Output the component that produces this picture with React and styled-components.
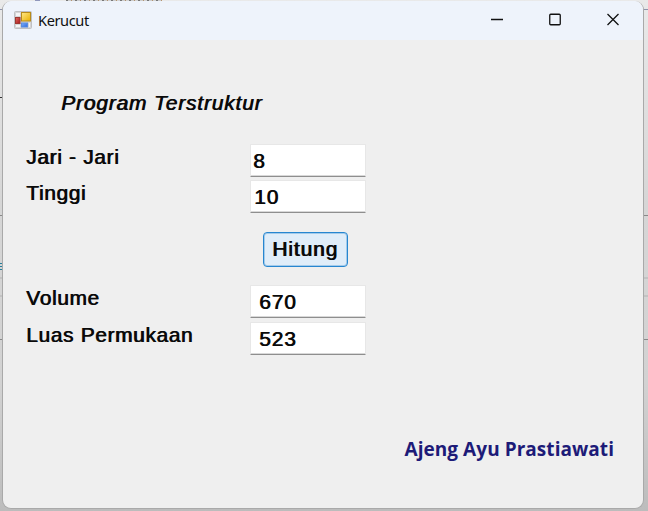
import React from "react";
import styled, { createGlobalStyle } from "styled-components";

const GlobalStyle = createGlobalStyle`
  * { box-sizing: border-box; }
  body { margin: 0; overflow: hidden; }
`;

const line = (color) => `linear-gradient(${color}, ${color})`;

const Desktop = styled.div`
  width: 648px;
  height: 511px;
  padding: 1px 4px 2px 2px;
  overflow: hidden;
  background-color: #d0d0d0;
  background-image:
    repeating-linear-gradient(90deg, #777 0 2px, #ccc 2px 5px, #b49370 5px 6px, #d4d4d4 6px 9px),
    ${line("#9097bb")},
    ${line("#27809c")}, ${line("#27809c")}, ${line("#27809c")},
    ${line("#333")},
    ${line("#8e93ab")},
    ${line("#898989")}, ${line("#898989")},
    ${line("#c3c3c3")}, ${line("#c3c3c3")},
    linear-gradient(#e9e9e9, #d6d6d6 40%, #d2d2d2 75%, #bcbcbc);
  background-repeat: no-repeat;
  background-size:
    96px 1px, 5px 1px,
    3px 1px, 3px 1px, 3px 1px, 3px 1px, 100% 1px,
    100% 1px, 100% 1px, 100% 2px, 100% 2px, 100% 100%;
  background-position:
    66px 0, 35px 0,
    0 263px, 0 266px, 0 269px, 0 97px, 0 9px,
    0 215px, 0 339px, 0 277px, 0 295px, 0 0;
`;

const Window = styled.main`
  display: flex;
  flex-direction: column;
  height: 508px;
  border: 1px solid #a9a9a9;
  border-top: 0;
  border-radius: 9px;
  overflow: hidden;
  background: #efefef;
`;

const TitleBar = styled.header`
  display: flex;
  align-items: center;
  height: 39px;
  flex: none;
  padding: 0 24px 2px 11px;
  background: #eef3fb;
`;

const Title = styled.h1`
  margin: 0 auto 0 6px;
  font: 400 14.6px/18px "Noto Sans", "Open Sans", sans-serif;
  letter-spacing: -0.4px;
  color: #111;
`;

const Controls = styled.div`
  display: flex;
  gap: 46px;
`;

const ControlButton = styled.button`
  display: flex;
  padding: 0;
  border: 0;
  background: none;
`;

const Form = styled.form`
  display: flex;
  flex-direction: column;
  padding: 49px 29px 0 23px;
  color: #0a0a0a;
  font: 400 20.8px/28px "Liberation Sans", Arial, sans-serif;
  letter-spacing: 0.7px;
  text-shadow: 0.8px 0 currentColor;
  -webkit-text-stroke: 0.1px currentColor;
`;

const Heading = styled.h2`
  margin: 0 0 27px 35px;
  font: italic 400 20.8px/28px "Liberation Sans", Arial, sans-serif;
  letter-spacing: 0.9px;
`;

const Field = styled.label`
  display: grid;
  grid-template-columns: 224px 116px;
  height: ${({ $height }) => $height}px;
`;

const Caption = styled.span`
  padding-top: 1px;
  line-height: 24px;
  white-space: nowrap;
`;

const NumberInput = styled.input`
  width: 116px;
  height: 33px;
  padding: 1px 0 0 ${({ $inset }) => $inset}px;
  border: 1px solid #e7e7e7;
  border-bottom-color: #8e8e8e;
  border-radius: 1px;
  outline: 0;
  background: #fff;
  box-shadow: inset 0 -1px #d8d8d8;
  color: inherit;
  font: inherit;
  letter-spacing: 0.9px;
  text-shadow: inherit;
  -webkit-text-stroke: inherit;
`;

const SubmitButton = styled.button`
  width: 85px;
  height: 35px;
  margin: 19px 0 18px 237px;
  padding: 0 1px 1px 0;
  border: 1px solid #2786d0;
  border-radius: 4px;
  background: #e0edf9;
  box-shadow: inset 0 0 0 1px #a3cbeb;
  color: inherit;
  font: inherit;
  letter-spacing: 0.95px;
  text-shadow: inherit;
  -webkit-text-stroke: inherit;
`;

const Author = styled.footer`
  margin-top: 81px;
  align-self: flex-end;
  color: #1d1b78;
  font: 700 19px/26px "Open Sans", "Noto Sans", sans-serif;
  letter-spacing: 0.05px;
  text-shadow: none;
  -webkit-text-stroke: 0;
`;

function FormIcon() {
  return (
    <svg width="18" height="18" viewBox="0 0 18 18">
      <defs>
        <linearGradient id="gold" x1="0" y1="0" x2="1" y2="1">
          <stop stopColor="#ffe88a" />
          <stop offset="1" stopColor="#e9b000" />
        </linearGradient>
        <linearGradient id="red" x1="0" y1="0" x2="1" y2="1">
          <stop stopColor="#e06b60" />
          <stop offset="1" stopColor="#a8141a" />
        </linearGradient>
        <linearGradient id="blue" x1="0" y1="0" x2="1" y2="1">
          <stop stopColor="#7eb0fa" />
          <stop offset="1" stopColor="#2f68dc" />
        </linearGradient>
      </defs>
      <rect x=".5" y=".5" width="17" height="17" rx="1" fill="#d5d5d7" stroke="#bfc0c3" />
      <path d="M2 2h4v3H2zM2 14h4v2H2zM15 12h1v4h-1z" fill="#f5f5f6" />
      <rect x="7.5" y="1.5" width="9" height="8.5" fill="url(#gold)" stroke="#b88b19" />
      <rect x="1.5" y="6.5" width="4.5" height="6" fill="url(#red)" stroke="#9d3832" />
      <rect x="7.5" y="12" width="6" height="4" fill="url(#blue)" stroke="#5a8de0" />
    </svg>
  );
}

const controls = [
  { name: "Minimize", shape: <path d="M0 6.5h12" /> },
  { name: "Maximize", shape: <rect x=".75" y="1.25" width="10.5" height="10.5" rx="1" /> },
  { name: "Close", shape: <path d="M.5 1l11 11M11.5 1l-11 11" /> },
];

const inputs = [
  { label: "Jari - Jari", value: "8", inset: 2, height: 36 },
  { label: "Tinggi", value: "10", inset: 3, height: 33 },
];

const results = [
  { label: "Volume", value: "670", inset: 8, height: 37 },
  { label: "Luas Permukaan", value: "523", inset: 8, height: 33 },
];

function FieldRow({ label, value, inset, height }) {
  return (
    <Field $height={height}>
      <Caption>{label}</Caption>
      <NumberInput $inset={inset} defaultValue={value} />
    </Field>
  );
}

export default function App() {
  return (
    <Desktop>
      <GlobalStyle />
      <Window>
        <TitleBar>
          <FormIcon />
          <Title>Kerucut</Title>
          <Controls>
            {controls.map(({ name, shape }) => (
              <ControlButton key={name} aria-label={name}>
                <svg width="12" height="13" viewBox="0 0 12 13" fill="none" stroke="#111" strokeWidth="1.3">
                  {shape}
                </svg>
              </ControlButton>
            ))}
          </Controls>
        </TitleBar>
        <Form onSubmit={(event) => event.preventDefault()}>
          <Heading>Program Terstruktur</Heading>
          {inputs.map((field) => <FieldRow key={field.label} {...field} />)}
          <SubmitButton>Hitung</SubmitButton>
          {results.map((field) => <FieldRow key={field.label} {...field} />)}
          <Author>Ajeng Ayu Prastiawati</Author>
        </Form>
      </Window>
    </Desktop>
  );
}
